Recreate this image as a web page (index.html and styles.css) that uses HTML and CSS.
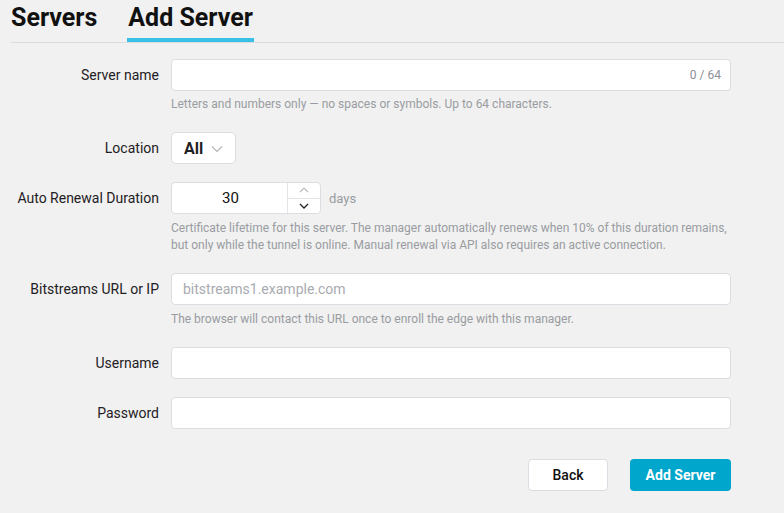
FILE: index.html
```html
<!DOCTYPE html>
<html>
<head>
<meta charset="utf-8">
<link rel="stylesheet" href="styles.css">
</head>
<body>
<div class="page">
  <nav class="tabs">
    <span class="tab">Servers</span>
    <span class="tab active">Add Server</span>
  </nav>
  <form class="form">
    <div class="row">
      <label class="label">Server name</label>
      <div class="field">
        <div class="input with-counter"><span class="counter">0 / 64</span></div>
        <div class="help help-tight">Letters and numbers only — no spaces or symbols. Up to 64 characters.</div>
      </div>
    </div>
    <div class="row">
      <label class="label">Location</label>
      <div class="field">
        <div class="select">
          <span class="select-value">All</span>
          <svg class="chev" width="12" height="8" viewBox="0 0 12 8"><path d="M1 1.5l5 5 5-5" fill="none" stroke="#b3b5ba" stroke-width="1.1"/></svg>
        </div>
      </div>
    </div>
    <div class="row">
      <label class="label">Auto Renewal Duration</label>
      <div class="field">
        <div class="num-line">
          <div class="number">
            <span class="num-value">30</span>
            <div class="spinner">
              <span class="spin up"><svg width="10" height="6" viewBox="0 0 10 6"><path d="M1 5l4-4 4 4" fill="none" stroke="#b8bac0" stroke-width="1.1"/></svg></span>
              <span class="spin down"><svg width="10" height="6" viewBox="0 0 10 6"><path d="M1 1l4 4 4-4" fill="none" stroke="#222" stroke-width="1.3"/></svg></span>
            </div>
          </div>
          <span class="unit">days</span>
        </div>
        <div class="help">Certificate lifetime for this server. The manager automatically renews when 10% of this duration remains, but only while the tunnel is online. Manual renewal via API also requires an active connection.</div>
      </div>
    </div>
    <div class="row">
      <label class="label">Bitstreams URL or IP</label>
      <div class="field">
        <div class="input"><span class="placeholder">bitstreams1.example.com</span></div>
        <div class="help">The browser will contact this URL once to enroll the edge with this manager.</div>
      </div>
    </div>
    <div class="row">
      <label class="label">Username</label>
      <div class="field"><div class="input"></div></div>
    </div>
    <div class="row">
      <label class="label">Password</label>
      <div class="field"><div class="input"></div></div>
    </div>
    <div class="actions">
      <button type="button" class="btn back">Back</button>
      <button type="button" class="btn primary">Add Server</button>
    </div>
  </form>
</div>
</body>
</html>
```
FILE: styles.css
```css
* { box-sizing: border-box; }
html, body { margin: 0; padding: 0; }
body {
  background: #f0f1f0;
  font-family: Roboto, "Liberation Sans", sans-serif;
  color: #1f2024;
  width: 784px;
  height: 513px;
  overflow: hidden;
}
.page { padding-left: 11px; }
.tabs {
  display: flex;
  gap: 31px;
  height: 43px;
  border-bottom: 1px solid #dcdde2;
  padding-top: 3px;
}
.tab {
  font-size: 25px;
  font-weight: 700;
  color: #111;
  line-height: 30px;
  height: 39px;
}
.tab.active {
  border-bottom: 4px solid #3abfe7;
  padding: 0 1px;
  margin-left: -1px;
}
.form {
  width: 720px;
  padding-top: 16px;
  display: flex;
  flex-direction: column;
  gap: 18px;
}
.row {
  display: grid;
  grid-template-columns: 148px 560px;
  column-gap: 12px;
  align-items: start;
}
.label {
  height: 32px;
  display: flex;
  align-items: center;
  justify-content: flex-end;
  font-size: 14px;
  color: #1f2024;
}
.field { display: flex; flex-direction: column; }
.input {
  height: 32px;
  background: #fff;
  border: 1px solid #dcdde2;
  border-radius: 4px;
  display: flex;
  align-items: center;
  padding: 0 11px;
}
.with-counter { justify-content: flex-end; padding-right: 9px; }
.counter { font-size: 12px; color: #8e9096; }
.placeholder { font-size: 14px; color: #a9abb0; }
.help {
  margin-top: 6px;
  margin-bottom: 1px;
  font-size: 12px;
  line-height: 17px;
  color: #9a9ca2;
}
.help-tight { margin-top: 5px; }
.select {
  width: 65px;
  height: 32px;
  background: #fff;
  border: 1px solid #dcdde2;
  border-radius: 5px;
  display: flex;
  align-items: center;
  padding-left: 12px;
  gap: 8px;
}
.select-value { font-size: 16px; font-weight: 700; color: #1f2024; }
.chev { margin-top: 2px; }
.num-line { display: flex; align-items: center; gap: 8px; }
.number {
  width: 150px;
  height: 32px;
  background: #fff;
  border: 1px solid #dcdde2;
  border-radius: 4px;
  display: flex;
}
.num-value {
  flex: 1;
  display: flex;
  align-items: center;
  justify-content: center;
  font-size: 15px;
  color: #111;
  padding-left: 2px;
}
.spinner {
  width: 33px;
  border-left: 1px solid #e3e4e8;
  display: flex;
  flex-direction: column;
}
.spin { flex: 1; display: flex; align-items: center; justify-content: center; }
.spin.up { border-bottom: 1px solid #e3e4e8; }
.unit { font-size: 13px; color: #9a9ca2; }
.actions {
  display: flex;
  justify-content: flex-end;
  gap: 22px;
  margin-top: 12px;
}
.btn {
  height: 32px;
  border-radius: 4px;
  font-family: Roboto, "Liberation Sans", sans-serif;
  font-size: 14px;
  cursor: pointer;
}
.back {
  width: 80px;
  background: #fff;
  border: 1px solid #dcdde2;
  color: #111;
  font-weight: 500;
}
.primary {
  width: 101px;
  background: #00a6cc;
  border: none;
  color: #fff;
  font-weight: 700;
}
```
